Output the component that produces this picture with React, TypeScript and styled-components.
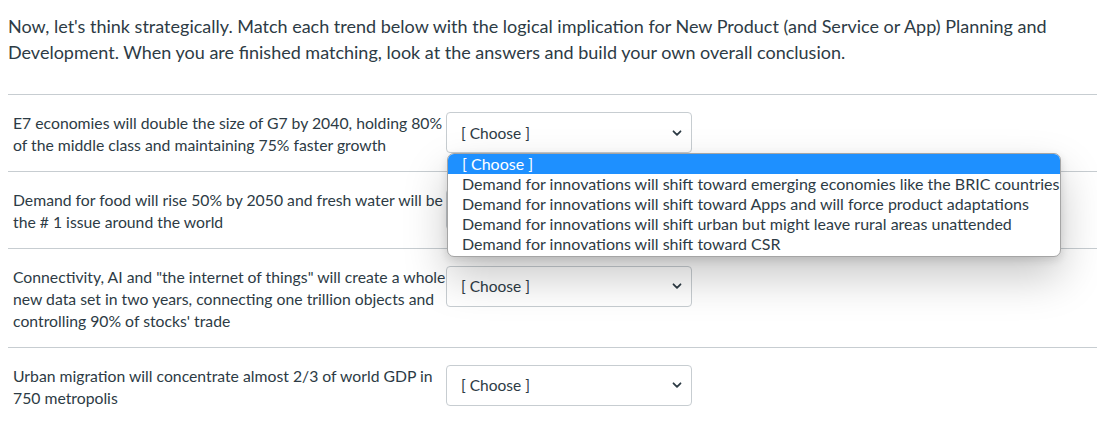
import * as React from "react";
import styled, { createGlobalStyle } from "styled-components";

const GlobalStyle = createGlobalStyle`
  body {
    margin: 0;
    background: #ffffff;
    font-family: Lato, "Noto Sans", sans-serif;
    color: #2d3b45;
  }
`;

const Page = styled.div`
  padding: 0 0 0 8px;
  overflow: hidden;
`;

const Intro = styled.p`
  margin: 13px 0 29px;
  max-width: 1060px;
  font-size: 18px;
  line-height: 26px;
`;

const Question = styled.div`
  display: grid;
  grid-template-columns: 433px 246px;
  align-items: start;
  border-top: 1px solid #c7cdd1;
  padding: 17px 0 14px 5px;
`;

const Trend = styled.div`
  font-size: 15.75px;
  line-height: 22.4px;
  margin-right: -3px;
`;

const SelectWrap = styled.div`
  position: relative;
`;

const SelectBox = styled.div`
  box-sizing: border-box;
  height: 41px;
  display: flex;
  align-items: center;
  justify-content: space-between;
  padding: 0 8px 0 14px;
  border: 1px solid #c7cdd1;
  border-radius: 4px;
  background: #ffffff;
  font-size: 15.5px;
  color: #2d3b45;
`;

const Popup = styled.ul`
  position: absolute;
  top: 41px;
  left: 1px;
  width: 614px;
  height: 104px;
  margin: 0;
  padding: 0;
  list-style: none;
  box-sizing: border-box;
  overflow: hidden;
  background: #ffffff;
  border: 1px solid #a5a5a5;
  border-radius: 7px;
  box-shadow: 0 20px 44px rgba(0, 0, 0, 0.22), 0 3px 8px rgba(0, 0, 0, 0.12);
  z-index: 5;
`;

const Option = styled.li<{ selected?: boolean }>`
  height: 20px;
  line-height: 20px;
  padding-left: 14px;
  font-size: 16px;
  white-space: nowrap;
  background: ${(p) => (p.selected ? "#1e90ff" : "transparent")};
  color: ${(p) => (p.selected ? "#ffffff" : "#2d3b45")};
`;

const Chevron = () => (
  <svg width="12" height="12" viewBox="0 0 12 12">
    <path d="M2.5 4.3 L6 7.8 L9.5 4.3" fill="none" stroke="#2d3b45" strokeWidth="1.8" strokeLinecap="round" strokeLinejoin="round" />
  </svg>
);

const options = [
  "[ Choose ]",
  "Demand for innovations will shift toward emerging economies like the BRIC countries",
  "Demand for innovations will shift toward Apps and will force product adaptations",
  "Demand for innovations will shift urban but might leave rural areas unattended",
  "Demand for innovations will shift toward CSR",
];

const trends = [
  "E7 economies will double the size of G7 by 2040, holding 80% of the middle class and maintaining 75% faster growth",
  "Demand for food will rise 50% by 2050 and fresh water will be the # 1 issue around the world",
  "Connectivity, AI and \"the internet of things\" will create a whole new data set in two years, connecting one trillion objects and controlling 90% of stocks' trade",
  "Urban migration will concentrate almost 2/3 of world GDP in 750 metropolis",
];

export default function App() {
  return (
    <Page>
      <GlobalStyle />
      <Intro>
        Now, let's think strategically. Match each trend below with the logical implication for New Product (and Service or App) Planning and
        Development. When you are finished matching, look at the answers and build your own overall conclusion.
      </Intro>
      {trends.map((t, i) => (
        <Question key={i}>
          <Trend>{t}</Trend>
          <SelectWrap>
            <SelectBox>
              <span>[ Choose ]</span>
              <Chevron />
            </SelectBox>
            {i === 0 && (
              <Popup>
                {options.map((o, j) => (
                  <Option key={j} selected={j === 0}>{o}</Option>
                ))}
              </Popup>
            )}
          </SelectWrap>
        </Question>
      ))}
    </Page>
  );
}
